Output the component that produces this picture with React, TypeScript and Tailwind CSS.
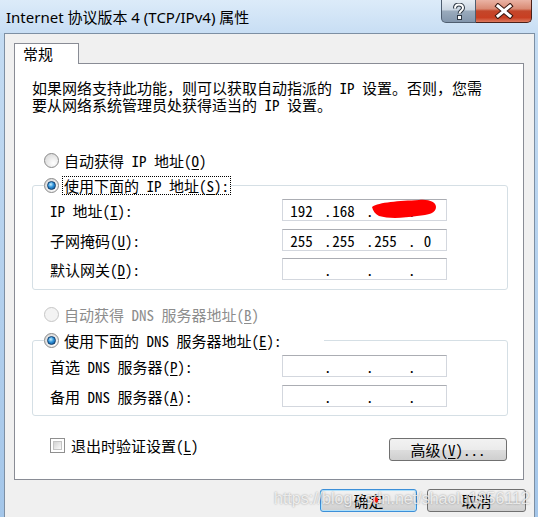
import { Fragment, ReactNode } from 'react';

const ui = "font-['Noto_Sans_Mono_CJK_SC','Noto_Sans_CJK_SC',sans-serif] text-[15px] leading-[17px] text-black";

function K({ children }: { children: ReactNode }) {
  return <span className="underline underline-offset-[2px]">{children}</span>;
}

function Radio({ checked = false, disabled = false }: { checked?: boolean; disabled?: boolean }) {
  return (
    <span
      className={`flex h-[15px] w-[15px] shrink-0 items-center justify-center rounded-full border ${
        disabled
          ? 'border-[#c6c6c6] bg-[#f3f3f3]'
          : 'border-[#8a8a8a] bg-[radial-gradient(circle_at_65%_70%,#ffffff,#d2d2d2)]'
      }`}
    >
      {checked && (
        <span className="h-[9px] w-[9px] rounded-full border border-[#123f6d] bg-[radial-gradient(circle_at_40%_35%,#c6efff_0%,#2f93da_45%,#0c4684_100%)]" />
      )}
    </span>
  );
}

function IpBox({ parts = ['', '', '', ''], redact = false }: { parts?: string[]; redact?: boolean }) {
  return (
    <div className="relative flex h-[22px] w-[165px] items-center border border-[#d3d7de] border-t-[#abadb3] bg-white pl-[7px]">
      {parts.map((p, i) => (
        <Fragment key={i}>
          <span className="w-[23px] text-center">{p}</span>
          {i < 3 && <span className="w-[19px] pl-[11px]">.</span>}
        </Fragment>
      ))}
      {redact && (
        <svg className="absolute left-[86px] top-[-2px]" width="70" height="24" viewBox="0 0 70 24">
          <path
            d="M3 9 C10 4 30 3 50 2 C60 1 67 4 67 9 C67 15 60 17 48 18 C35 20 20 21 10 18 C6 16 4 13 3 9 Z"
            fill="#ff0000"
          />
        </svg>
      )}
    </div>
  );
}

function Row({ label, parts, redact }: { label: ReactNode; parts?: string[]; redact?: boolean }) {
  return (
    <div className="flex h-[22px] items-center">
      <span className="w-[232px]">{label}</span>
      <IpBox parts={parts} redact={redact} />
    </div>
  );
}

const btn =
  'flex h-[23px] items-center justify-center rounded-[3px] border bg-[linear-gradient(to_bottom,#f2f2f2_0%,#ebebeb_50%,#dddddd_51%,#cfcfcf_100%)]';

export default function App() {
  return (
    <div className={`relative h-[517px] w-[538px] overflow-hidden bg-[linear-gradient(to_bottom,#c6ddf3,#a4c6e9)] ${ui}`}>
      {/* title bar */}
      <div className="flex h-[33px] items-start justify-between bg-[linear-gradient(to_bottom,#dcebf9,#c8def4)]">
        <div className="pl-[6px] pt-[7px] font-['Noto_Sans','Noto_Sans_CJK_SC',sans-serif] text-[15px] leading-[20px]">
          Internet 协议版本 4 (TCP/IPv4) 属性
        </div>
        <div className="mr-[6px] flex">
          <div className="flex h-[23px] w-[35px] items-center justify-center rounded-bl-[5px] border border-t-0 border-[#4f5e70] bg-[linear-gradient(to_bottom,#e6edf4_0%,#cbd6e2_45%,#9aabbd_50%,#8396ac_100%)]">
            <svg width="14" height="17" viewBox="0 0 14 17">
              <path
                d="M3 5.5 C3 2.5 5 1.5 7 1.5 C9.5 1.5 11 3 11 5 C11 7.5 7.5 8 7.5 10.5"
                fill="none"
                stroke="#2c3642"
                strokeWidth="4"
              />
              <path
                d="M3 5.5 C3 2.5 5 1.5 7 1.5 C9.5 1.5 11 3 11 5 C11 7.5 7.5 8 7.5 10.5"
                fill="none"
                stroke="#ffffff"
                strokeWidth="2"
              />
              <rect x="5" y="12" width="5" height="5" fill="#2c3642" />
              <rect x="6" y="13" width="3" height="3" fill="#ffffff" />
            </svg>
          </div>
          <div className="flex h-[23px] w-[56px] items-center justify-center rounded-br-[5px] border border-l-0 border-t-0 border-[#4a2019] bg-[linear-gradient(to_bottom,#eab3a4_0%,#d98a74_40%,#c4462a_50%,#c83f22_80%,#dd7a5f_100%)]">
            <svg width="20" height="16" viewBox="0 0 20 16">
              <path d="M4 3 L16 13 M16 3 L4 13" stroke="#3a1710" strokeWidth="5" strokeLinecap="square" />
              <path d="M4 3 L16 13 M16 3 L4 13" stroke="#ffffff" strokeWidth="3" strokeLinecap="square" />
            </svg>
          </div>
        </div>
      </div>

      {/* window body */}
      <div className="flex h-[484px] pl-[4px] pr-[3px]">
        <div className="flex flex-1 flex-col border-l border-r border-t border-[#7d8fa3] bg-[#f0f0f0] pl-[9px] pr-[10px] pt-[9px]">
          <div className="flex">
            <div className="relative z-10 -mb-px h-[21px] w-[65px] border border-b-0 border-[#898c95] bg-white pl-[8px] pt-[1px]">
              常规
            </div>
          </div>

          <div className="flex h-[417px] flex-col border border-[#898c95] bg-white pl-[17px] pr-[15px]">
            <div className="mt-[15px] flex flex-col whitespace-nowrap leading-[17px]">
              <span>如果网络支持此功能，则可以获取自动指派的 IP 设置。否则，您需</span>
              <span>要从网络系统管理员处获得适当的 IP 设置。</span>
            </div>

            <div className="mt-[39px] flex h-[17px] items-center gap-[5px] pl-[12px]">
              <Radio />
              <span>
                自动获得 IP 地址(<K>O</K>)
              </span>
            </div>

            <fieldset className="mt-[8px] rounded-[3px] border border-[#d5dfe5] px-0 pb-[9px]">
              <legend className="ml-[11px] pr-[1px]">
                <span className="flex h-[17px] items-center gap-[4px]">
                  <Radio checked />
                  <span className="px-[1px] outline-1 outline-dotted outline-black">
                    使用下面的 IP 地址(<K>S</K>):
                  </span>
                </span>
              </legend>
              <div className="flex flex-col pl-[17px] pt-[5px]">
                <Row label={<>IP 地址(<K>I</K>):</>} parts={['192', '168', '', '']} redact />
                <div className="mt-[8px]">
                  <Row label={<>子网掩码(<K>U</K>):</>} parts={['255', '255', '255', '0']} />
                </div>
                <div className="mt-[7px]">
                  <Row label={<>默认网关(<K>D</K>):</>} />
                </div>
              </div>
            </fieldset>

            <div className="mt-[16px] flex h-[17px] items-center gap-[5px] pl-[12px] text-[#8d8d8d]">
              <Radio disabled />
              <span>
                自动获得 DNS 服务器地址(<K>B</K>)
              </span>
            </div>

            <fieldset className="mt-[9px] rounded-[3px] border border-[#d5dfe5] px-0 pb-[8px]">
              <legend className="ml-[11px] pr-[41px]">
                <span className="flex h-[17px] items-center gap-[4px]">
                  <Radio checked />
                  <span className="px-[1px]">
                    使用下面的 DNS 服务器地址(<K>E</K>):
                  </span>
                </span>
              </legend>
              <div className="flex flex-col pl-[17px] pt-[6px]">
                <Row label={<>首选 DNS 服务器(<K>P</K>):</>} />
                <div className="mt-[8px]">
                  <Row label={<>备用 DNS 服务器(<K>A</K>):</>} />
                </div>
              </div>
            </fieldset>

            <div className="mt-[22px] flex items-start justify-between pl-[18px] pr-[1px]">
              <div className="flex h-[15px] items-center gap-[6px]">
                <span className="h-[15px] w-[15px] border border-[#8f8f8f] bg-white p-[2px]">
                  <span className="block h-full w-full border border-[#c4c4c4] bg-[linear-gradient(135deg,#d2d2d2,#fbfbfb)]" />
                </span>
                <span>
                  退出时验证设置(<K>L</K>)
                </span>
              </div>
              <button className={`${btn} w-[118px] border-[#707070]`}>
                高级(<K>V</K>)...
              </button>
            </div>
          </div>

          <div className="-mr-[2px] mt-[9px] flex justify-end gap-[10px]">
            <button className={`${btn} relative w-[97px] border-[#3c8fd8] shadow-[inset_0_0_0_1px_#aee0fb]`}>
              确定
              <span className="absolute left-[52px] top-[7px] h-[6px] w-[5px] rounded-full bg-[#ff1010]" />
            </button>
            <button className={`${btn} w-[99px] border-[#707070]`}>取消</button>
          </div>
        </div>
      </div>

      {/* csdn watermark */}
      <div className="pointer-events-none absolute left-[274px] top-[490px] font-['Liberation_Sans',sans-serif] text-[16px] leading-[18px] text-white/75 [text-shadow:0_0_2px_rgba(0,0,0,0.4)]">
        https://blog.csdn.net/shaolu1056112
      </div>
    </div>
  );
}
